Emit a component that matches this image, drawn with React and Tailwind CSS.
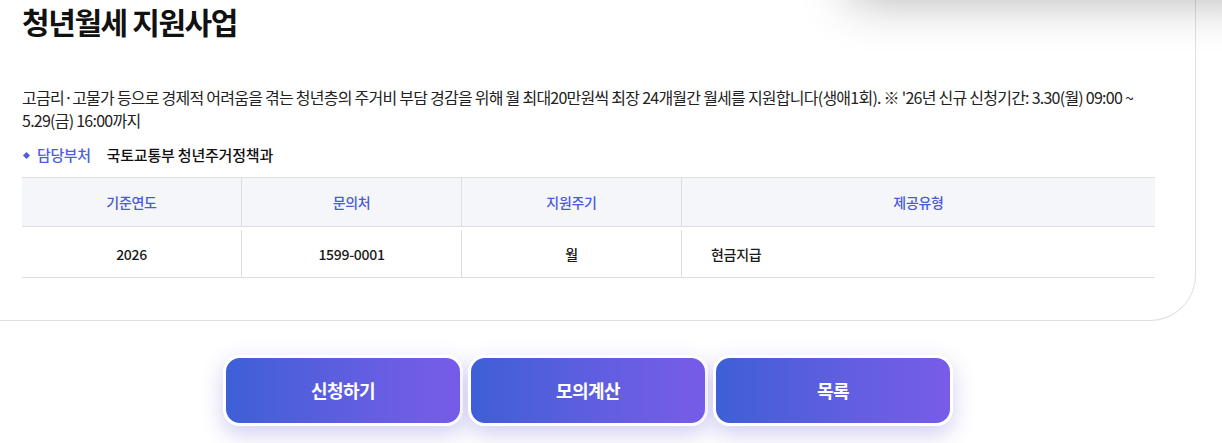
import React from "react";

const FONT = { fontFamily: '"Noto Sans CJK KR", "Noto Sans", sans-serif' };

const columns = [
  { head: "기준연도", body: "2026", w: "w-[220px]", align: "text-center" },
  { head: "문의처", body: "1599-0001", w: "w-[220px]", align: "text-center" },
  { head: "지원주기", body: "월", w: "w-[220px]", align: "text-center" },
  { head: "제공유형", body: "현금지급", w: "flex-1", align: "text-left pl-[29px]" },
];

function ActionButton({ label }) {
  return (
    <button className="w-[240px] h-[71px] rounded-[17px] border-[3px] border-white bg-gradient-to-r from-[#3d5fd7] to-[#785ce9] text-white text-[18px] font-bold tracking-[-0.5px] shadow-[0_8px_22px_rgba(88,80,205,0.28)]">
      {label}
    </button>
  );
}

export default function App() {
  return (
    <div className="relative w-[1222px] h-[443px] overflow-hidden bg-white text-[#222]" style={FONT}>
      {/* shadow cast by the floating header above */}
      <div className="absolute top-[-60px] left-[850px] w-[420px] h-[60px] bg-white shadow-[0_0_50px_rgba(0,0,0,0.3)] z-10" />

      {/* CARD */}
      <div className="w-[1196px] border-r border-b border-[#e0e0e0] rounded-br-[46px] pl-[22px] pr-[40px] pb-[42px]">
        <h1 className="text-[30px] leading-[42px] font-bold tracking-[-1.4px] text-[#111]">청년월세 지원사업</h1>

        <p className="mt-[44px] text-[16px] leading-[23px] tracking-[-0.75px] text-[#222] w-[1140px]">
          고금리·고물가 등으로 경제적 어려움을 겪는 청년층의 주거비 부담 경감을 위해 월 최대20만원씩 최장 24개월간 월세를 지원합니다(생애1회). ※ '26년 신규 신청기간: 3.30(월) 09:00 ~ 5.29(금) 16:00까지
        </p>

        <div className="mt-[13px] flex items-center text-[15px] leading-[20px] tracking-[-0.4px]">
          <span className="w-[5px] h-[5px] bg-[#4f5fdc] rotate-45 ml-[2px] mr-[8px]" />
          <span className="text-[#4f5fdc] font-medium">담당부처</span>
          <span className="ml-[16px] font-medium text-[#111] tracking-[-0.2px]">국토교통부 청년주거정책과</span>
        </div>

        {/* TABLE */}
        <div className="mt-[12px] w-[1133px] border-t border-b border-[#dedede] text-[14px] tracking-[-0.3px]">
          <div className="flex h-[49px] bg-[#f5f6fa] border-b border-[#dedede]">
            {columns.map((c, i) => (
              <div
                key={c.head}
                className={`${c.w} flex items-center justify-center text-[#4a5ad8] font-medium ${i < 3 ? "border-r border-[#dedede]" : ""}`}
              >
                {c.head}
              </div>
            ))}
          </div>
          <div className="flex h-[50px]">
            {columns.map((c, i) => (
              <div key={c.head} className={`${c.w} flex items-center pt-[2px] pb-0`}>
                <div
                  className={`w-full h-[48px] leading-[48px] mt-[2px] font-medium text-[#1a1a1a] ${c.align} ${i < 3 ? "border-r border-[#dedede]" : ""}`}
                >
                  {c.body}
                </div>
              </div>
            ))}
          </div>
        </div>
      </div>

      {/* BUTTONS */}
      <div className="w-[1176px] mt-[34px] flex justify-center gap-[5px]">
        <ActionButton label="신청하기" />
        <ActionButton label="모의계산" />
        <ActionButton label="목록" />
      </div>
    </div>
  );
}
